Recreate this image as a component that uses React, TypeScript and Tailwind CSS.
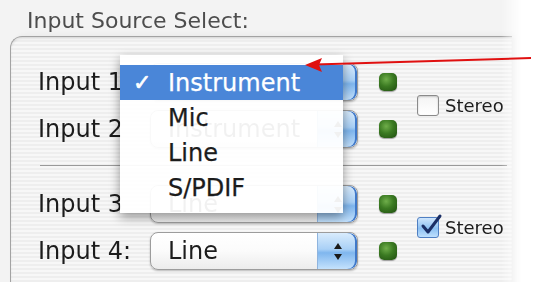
import React from "react";

type RowProps = { label: string; value: string };

function Led() {
  return (
    <div className="h-[18px] w-[18px] rounded-[5px] bg-[radial-gradient(circle_at_40%_35%,#6fae4a_0%,#3b7a22_45%,#1f4d10_100%)] shadow-[0_1px_1px_rgba(0,0,0,0.35)]" />
  );
}

function Stepper() {
  return (
    <div className="flex h-full w-[40px] flex-col items-center justify-center gap-[5px] rounded-r-[8px] border-l border-[#8fb4de] bg-[linear-gradient(180deg,#d9ecfd_0%,#a9d0f6_45%,#7fb6ee_55%,#c4e2fd_100%)] shadow-[inset_-2px_0_0_#3f78c9]">
      <div className="h-0 w-0 border-x-[4px] border-b-[6px] border-x-transparent border-b-[#1a1a1a]" />
      <div className="h-0 w-0 border-x-[4px] border-t-[6px] border-x-transparent border-t-[#1a1a1a]" />
    </div>
  );
}

function InputRow({ label, value }: RowProps) {
  return (
    <div className="flex h-[38px] items-center">
      <span className="w-[112px] text-[24px] leading-none text-[#1c1c1c]">{label}</span>
      <div className="flex h-[38px] w-[208px] items-center overflow-hidden rounded-[8px] border border-[#9c9c9c] bg-[linear-gradient(180deg,#ffffff_0%,#fbfbfb_50%,#ececec_100%)] shadow-[0_1px_2px_rgba(0,0,0,0.25)]">
        <span className="flex-1 pl-[17px] text-[24px] leading-none text-[#1c1c1c]">{value}</span>
        <Stepper />
      </div>
      <div className="ml-[21px]">
        <Led />
      </div>
    </div>
  );
}

function Stereo({ checked }: { checked: boolean }) {
  return (
    <div className="ml-[20px] flex items-center gap-[6px]">
      <div
        className={
          checked
            ? "relative h-[21px] w-[22px] rounded-[3px] border border-[#4f7fc2] bg-[linear-gradient(180deg,#cfe6fd_0%,#8cc0f2_55%,#bfe0fd_100%)]"
            : "h-[21px] w-[22px] rounded-[3px] border border-[#8a8a8a] bg-[linear-gradient(180deg,#f4f4f4_0%,#ffffff_100%)] shadow-[inset_0_1px_2px_rgba(0,0,0,0.2)]"
        }
      >
        {checked && (
          <svg className="absolute -top-[5px] left-[1px]" width="24" height="24" viewBox="0 0 24 24">
            <path d="M4 13 L9 19 L21 3" fill="none" stroke="#1b2f66" strokeWidth="3" strokeLinecap="round" strokeLinejoin="round" />
          </svg>
        )}
      </div>
      <span className="text-[18px] leading-none text-[#1c1c1c]">Stereo</span>
    </div>
  );
}

function Group({ rows, checked }: { rows: RowProps[]; checked: boolean }) {
  return (
    <div className="flex items-center pl-[27px]">
      <div className="flex flex-col gap-[9px]">
        {rows.map((r) => (
          <InputRow key={r.label} label={r.label} value={r.value} />
        ))}
      </div>
      <Stereo checked={checked} />
    </div>
  );
}

const menuItems = ["Instrument", "Mic", "Line", "S/PDIF"];

export default function App() {
  return (
    <div className="relative h-[282px] w-[534px] overflow-hidden bg-white font-['DejaVu_Sans',sans-serif]">
      <div className="w-[522px] bg-[#f3f3f3] [mask-image:linear-gradient(to_right,black_96%,transparent)]">
        <div className="pl-[27px] pt-[8px] text-[22px] leading-[26px] text-[#4d4d4d]">
          Input Source Select:
        </div>
        <div className="ml-[10px] mt-[2px] h-[250px] w-[502px] rounded-tl-[12px] border-l border-t border-[#a3a3a3] bg-[repeating-linear-gradient(0deg,#eeeeee_0px,#eeeeee_2px,#f7f7f7_2px,#f7f7f7_4px)] pt-[26px] shadow-[inset_0_2px_2px_rgba(0,0,0,0.08),4px_0_6px_rgba(0,0,0,0.06)]">
          <Group
            checked={false}
            rows={[
              { label: "Input 1", value: "Instrument" },
              { label: "Input 2", value: "Instrument" },
            ]}
          />
          <div className="ml-[29px] mt-[17px] h-px w-[467px] bg-[#9a9a9a]" />
          <div className="mt-[19px]">
            <Group
              checked={true}
              rows={[
                { label: "Input 3", value: "Line" },
                { label: "Input 4:", value: "Line" },
              ]}
            />
          </div>
        </div>
      </div>

      {/* popup menu over Input 1 */}
      <div className="absolute left-[120px] top-[55px] h-[158px] w-[223px] bg-[rgba(255,255,255,0.94)] pt-[10px] shadow-[0_4px_10px_rgba(0,0,0,0.4)]">
        {menuItems.map((item, i) => (
          <div
            key={item}
            className={
              i === 0
                ? "flex h-[35px] items-center bg-[#4a86d8] text-white"
                : "flex h-[35px] items-center text-[#1c1c1c]"
            }
          >
            <span className="w-[48px] pl-[13px] text-[22px] leading-none [-webkit-text-stroke:0.6px]">{i === 0 ? "✓" : ""}</span>
            <span className="text-[24px] leading-none [-webkit-text-stroke:0.25px]">{item}</span>
          </div>
        ))}
      </div>

      {/* annotation arrow */}
      <svg className="pointer-events-none absolute left-0 top-0" width="534" height="282" viewBox="0 0 534 282">
        <line x1="531" y1="58" x2="315" y2="64.5" stroke="#e01010" strokeWidth="2" />
        <path d="M305 65 L322 58 L319 65 L322 72 Z" fill="#e01010" />
      </svg>
    </div>
  );
}
